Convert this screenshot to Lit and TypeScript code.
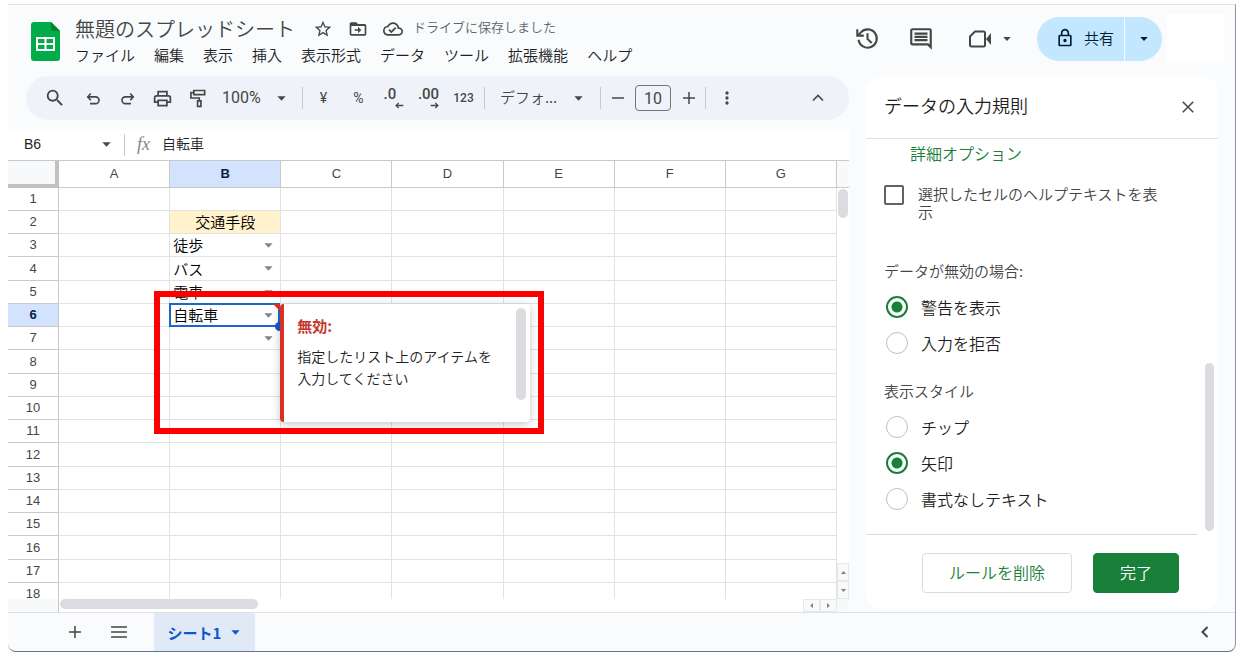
import { LitElement, html, css, svg, nothing } from "lit";
import { customElement, property, state } from "lit/decorators.js";
import { classMap } from "lit/directives/class-map.js";

const fill = (d: string) => svg`<path fill="currentColor" fill-rule="evenodd" d=${d}></path>`;
const line = (d: string, w = 2) =>
  svg`<path fill="none" stroke="currentColor" stroke-width=${w} d=${d}></path>`;

const ICONS: Record<string, unknown> = {
  star: fill("M22 9.24l-7.19-.62L12 2 9.19 8.63 2 9.24l5.46 4.73L5.82 21 12 17.27 18.18 21l-1.63-7.03L22 9.24zM12 15.4l-3.76 2.27 1-4.28-3.32-2.88 4.38-.38L12 6.1l1.71 4.04 4.38.38-3.32 2.88 1 4.28L12 15.4z"),
  move: fill("M20 6h-8l-2-2H4c-1.1 0-2 .9-2 2v12c0 1.1.9 2 2 2h16c1.1 0 2-.9 2-2V8c0-1.1-.9-2-2-2zm0 12H4V8.500h16V18zm-8-.800l4-4-4-4v3H8v2h4v3z"),
  cloud: fill("M19.35 10.04C18.67 6.59 15.64 4 12 4 9.11 4 6.6 5.64 5.35 8.04 2.34 8.36 0 10.91 0 14c0 3.31 2.69 6 6 6h13c2.76 0 5-2.24 5-5 0-2.64-2.05-4.78-4.65-4.96zM19 18H6c-2.21 0-4-1.79-4-4 0-2.05 1.53-3.76 3.56-3.97l1.07-.11.5-.95C8.08 7.14 9.94 6 12 6c2.62 0 4.88 1.86 5.39 4.43l.3 1.5 1.53.11c1.56.1 2.78 1.41 2.78 2.96 0 1.65-1.35 3-3 3zm-9-3.82l-2.09-2.09L6.5 13.5 10 17l6.01-6.01-1.41-1.41z"),
  history: svg`${line("M3.4 13.200A8.800 8.800 0 1 0 5.600 6.100L3.200 8.600")}${line("M2.200 3v6.200h6.200")}${line("M12 7v5.400l4 4")}`,
  comment: fill("M22 4c0-1.1-.89-2-2-2H4c-1.1 0-2 .9-2 2v12c0 1.1.9 2 2 2h14l4 4V4zM20 4v13.17L18.83 16H4V4h16zM6 12h12v2H6zm0-3h12v2H6zm0-3h12v2H6z"),
  meet: svg`${line("M7 4.500h8.500a1.500 1.500 0 0 1 1.500 1.500v12a1.500 1.500 0 0 1-1.500 1.500h-12A1.500 1.500 0 0 1 2 18V9.500z")}${fill("M18 12l5-6v12z")}`,
  lock: fill("M18 8h-1V6c0-2.76-2.24-5-5-5S7 3.24 7 6v2H6c-1.1 0-2 .9-2 2v10c0 1.1.9 2 2 2h12c1.1 0 2-.9 2-2V10c0-1.1-.9-2-2-2zM9 6c0-1.66 1.34-3 3-3s3 1.34 3 3v2H9V6zm9 14H6V10h12v10zm-6-3c1.1 0 2-.9 2-2s-.9-2-2-2-2 .9-2 2 .9 2 2 2z"),
  search: fill("M15.5 14h-.79l-.28-.27A6.471 6.471 0 0 0 16 9.5 6.5 6.5 0 1 0 9.5 16c1.61 0 3.09-.59 4.23-1.57l.27.28v.79l5 4.99L20.49 19l-4.99-5zm-6 0C7.01 14 5 11.99 5 9.5S7.01 5 9.5 5 14 7.01 14 9.5 11.99 14 9.5 14z"),
  undo: svg`${line("M9 6L5 10.500l4 4.500", 2.2)}${line("M5 10.500h10.500a4.500 4.500 0 0 1 0 9H8", 2.2)}`,
  redo: svg`${line("M15 6l4 4.500-4 4.500", 2.2)}${line("M19 10.500H8.500a4.500 4.500 0 0 0 0 9H16", 2.2)}`,
  print: fill("M19 8h-1V3H6v5H5c-1.66 0-3 1.34-3 3v6h4v4h12v-4h4v-6c0-1.66-1.34-3-3-3zM8 5h8v3H8V5zm8 12v2H8v-4h8v2zm2-2v-2H6v2H4v-4c0-.55.45-1 1-1h14c.55 0 1 .45 1 1v4h-2z"),
  roller: svg`${line("M7 3h13v5H7z")}${line("M7 5.500H3.500V12h10v3")}${line("M11.500 15.500h4V22h-4z")}`,
  minus: line("M4 12h16"),
  plus: line("M4 12h16M12 4v16"),
  more: fill("M12 8a2 2 0 1 0 0-4 2 2 0 0 0 0 4zm0 2a2 2 0 1 0 0 4 2 2 0 0 0 0-4zm0 6a2 2 0 1 0 0 4 2 2 0 0 0 0-4z"),
  up: line("M6 15l6-6 6 6"),
  left: line("M15 6l-6 6 6 6", 2.5),
  close: line("M5 5l14 14M19 5L5 19"),
  menu: line("M2.500 6h19M2.500 12h19M2.500 18h19"),
  caret: fill("M3 7h18l-9 10z"),
  arrowLeft: line("M22 12H4M10 5l-7 7 7 7", 3.5),
  arrowRight: line("M2 12h18M14 5l7 7-7 7", 3.5),
};

@customElement("ui-icon")
class UiIcon extends LitElement {
  @property() name = "";
  @property({ type: Number }) size = 20;
  static styles = css`
    :host { display: inline-flex; flex: none; }
    svg { display: block; }
  `;
  render() {
    return html`<svg width=${this.size} height=${this.size} viewBox="0 0 24 24" aria-hidden="true">${ICONS[this.name]}</svg>`;
  }
}

const reset = css`
  :host, *, *::before, *::after { box-sizing: border-box; }
  :host { font-family: "Noto Sans CJK JP", sans-serif; font-weight: 350; color: #444746; }
  button, input, select { font: inherit; color: inherit; margin: 0; padding: 0; border: 0; background: none; border-radius: 0; }
  button { display: inline-flex; align-items: center; justify-content: center; cursor: pointer; flex: none; }
  select { appearance: none; min-width: 0; }
  .pick { display: grid; align-items: center; }
  .pick > * { grid-area: 1 / 1; }
  .pick ui-icon { justify-self: end; pointer-events: none; }
`;

@customElement("sheet-header")
class SheetHeader extends LitElement {
  static styles = [reset, css`
    :host { display: flex; height: 71px; padding: 0 11px 0 23px; }
    .logo { align-self: flex-start; margin: 17px 15px 0 0; flex: none; }
    .doc { padding-top: 10px; flex: 1; min-width: 0; white-space: nowrap; }
    .title { display: flex; align-items: center; height: 28px; }
    h1 { margin: 0 18px 0 0; font-size: 20px; line-height: 28px; font-weight: 350; }
    .title button { margin-right: 15px; }
    .title .saved-icon { margin-right: 10px; }
    .saved { font-size: 13px; line-height: 24px; color: #5f6368; align-self: flex-start; }
    nav { display: flex; gap: 19px; height: 24px; align-items: center; }
    nav button { font-size: 15px; line-height: 24px; color: #1f1f1f; }
    .actions { display: flex; align-items: center; height: 67px; }
    .round { width: 54px; height: 40px; }
    .meet { width: 66px; height: 40px; gap: 10px; margin-right: 23px; }
    .meet.meet { padding-left: 17px; }
    .share { display: flex; gap: 1px; border-radius: 22px; overflow: hidden; height: 44px; color: #001d35; margin-right: 5px; }
    .share button { background: #c2e7ff; }
    .share-main { width: 87px; font-size: 15px; gap: 9px; }
    .share-main.share-main { padding: 0 0 2px 8px; }
    .share-more { width: 37px; }
    .account { width: 57px; height: 49px; background: #fff; }
  `];
  render() {
    const menus = ["ファイル", "編集", "表示", "挿入", "表示形式", "データ", "ツール", "拡張機能", "ヘルプ"];
    return html`
      <svg class="logo" width="29" height="39" viewBox="0 0 29 39" aria-hidden="true">
        <path fill="#00ac47" d="M3 0h17l9 9v27a3 3 0 0 1-3 3H3a3 3 0 0 1-3-3V3a3 3 0 0 1 3-3z"></path>
        <path fill="#00832d" d="M20 0l9 9h-9z"></path>
        <path fill="#fff" fill-rule="evenodd" d="M5 15h19v14H5zM7 17v4h6.500v-4zM15.500 17v4H22v-4zM7 23v4h6.500v-4zM15.500 23v4H22v-4z"></path>
      </svg>
      <div class="doc">
        <div class="title">
          <h1>無題のスプレッドシート</h1>
          <button aria-label="スター"><ui-icon name="star" size="20"></ui-icon></button>
          <button aria-label="移動"><ui-icon name="move" size="20"></ui-icon></button>
          <button class="saved-icon" aria-label="保存状況"><ui-icon name="cloud" size="20"></ui-icon></button>
          <span class="saved">ドライブに保存しました</span>
        </div>
        <nav>${menus.map((m) => html`<button>${m}</button>`)}</nav>
      </div>
      <div class="actions">
        <button class="round" aria-label="変更履歴"><ui-icon name="history" size="25"></ui-icon></button>
        <button class="round" aria-label="コメント"><ui-icon name="comment" size="26"></ui-icon></button>
        <button class="meet" aria-label="通話"><ui-icon name="meet" size="24"></ui-icon><ui-icon name="caret" size="10"></ui-icon></button>
        <div class="share">
          <button class="share-main"><ui-icon name="lock" size="20"></ui-icon>共有</button>
          <button class="share-more" aria-label="共有オプション"><ui-icon name="caret" size="10"></ui-icon></button>
        </div>
        <div class="account"></div>
      </div>`;
  }
}

@customElement("sheet-toolbar")
class SheetToolbar extends LitElement {
  static styles = [reset, css`
    :host { display: flex; align-items: center; height: 44px; margin-left: 18px; padding: 0 14px 0 8px; border-radius: 22px; background: #eff3f9; }
    button { width: 35px; height: 32px; font: 14px/20px Roboto, sans-serif; }
    .search { width: 41px; }
    .sep { width: 1px; height: 22px; margin: 0 3px; background: #c7cacd; flex: none; }
    .pick ui-icon { margin-right: 12px; }
    .zoom { width: 84px; }
    .zoom select { font: 16px/24px Roboto, sans-serif; padding-left: 7px; }
    .typeface { width: 109px; }
    .typeface ui-icon { margin-right: 13px; }
    .typeface select { font-size: 15px; line-height: 24px; padding: 0 0 2px 12px; }
    .decimal { display: grid; justify-items: start; justify-content: center; align-content: center; padding-top: 2px; font-size: 15px; line-height: 13px; font-weight: 500; }
    .decimal ui-icon { justify-self: end; }
    .less { grid-template-columns: 20px; }
    .digits { font-size: 12px; font-weight: 500; }
    .step { width: 27px; }
    .size { width: 36px; height: 26px; margin: 0 4px; border: 1px solid #747775; border-radius: 4px; text-align: center; font: 16px/24px Roboto, sans-serif; }
    .collapse { margin-left: auto; }
  `];
  render() {
    return html`
      <button class="search" aria-label="検索"><ui-icon name="search" size="22"></ui-icon></button>
      <button aria-label="元に戻す"><ui-icon name="undo" size="18"></ui-icon></button>
      <button aria-label="やり直し"><ui-icon name="redo" size="18"></ui-icon></button>
      <button aria-label="印刷"><ui-icon name="print" size="21"></ui-icon></button>
      <button aria-label="書式を貼り付け"><ui-icon name="roller" size="20"></ui-icon></button>
      <label class="pick zoom"><select aria-label="ズーム"><option>100%</option></select><ui-icon name="caret" size="11"></ui-icon></label>
      <span class="sep"></span>
      <button>¥</button>
      <button>%</button>
      <button class="decimal less" aria-label="小数点以下の桁数を減らす"><span>.0</span><ui-icon name="arrowLeft" size="9"></ui-icon></button>
      <button class="decimal" aria-label="小数点以下の桁数を増やす"><span>.00</span><ui-icon name="arrowRight" size="9"></ui-icon></button>
      <button class="digits">123</button>
      <span class="sep"></span>
      <label class="pick typeface"><select aria-label="フォント"><option>デフォ...</option></select><ui-icon name="caret" size="11"></ui-icon></label>
      <span class="sep"></span>
      <button class="step" aria-label="小さく"><ui-icon name="minus" size="18"></ui-icon></button>
      <input class="size" aria-label="フォントサイズ" value="10">
      <button class="step" aria-label="大きく"><ui-icon name="plus" size="18"></ui-icon></button>
      <span class="sep"></span>
      <button aria-label="その他"><ui-icon name="more" size="20"></ui-icon></button>
      <button class="collapse" aria-label="メニューを非表示"><ui-icon name="up" size="20"></ui-icon></button>`;
  }
}

const COLUMNS = ["A", "B", "C", "D", "E", "F", "G"];
const CHOICES: Record<number, string> = { 3: "徒歩", 4: "バス", 5: "電車", 6: "自転車", 7: "" };

@customElement("sheet-grid")
class SheetGrid extends LitElement {
  @state() private active = 6;
  static styles = [reset, css`
    :host { display: flex; flex-direction: column; flex: 1; min-height: 0; background: #fff; }
    .formula { display: flex; align-items: center; height: 32px; border-bottom: 1px solid #c7c9cb; flex: none; color: #1f1f1f; }
    .name { width: 116px; }
    .name input { width: 100%; padding: 0 0 2px 16px; font: 14px/20px "Liberation Sans", sans-serif; }
    .name ui-icon { margin-right: 12px; color: #444746; }
    .fx { width: 38px; padding: 0 0 2px 12px; border-left: 1px solid #c7c9cb; font: italic 18px/20px "Liberation Serif", serif; color: #80868b; flex: none; }
    .entry { flex: 1; font-size: 14px; line-height: 24px; min-width: 0; padding-bottom: 4px; }
    .view { display: flex; flex: 1; min-height: 0; }
    .cells { flex: 1; min-width: 0; overflow: hidden; }
    table { width: 100%; table-layout: fixed; border-collapse: separate; border-spacing: 0; }
    th, td { height: 23px; padding: 0; border: solid #e1e3e1; border-width: 0 1px 1px 0; font-size: 15px; line-height: 20px; color: #000; }
    tr.tall > * { height: 24px; }
    th { font: 13px/16px "Liberation Sans", sans-serif; color: #444746; border-color: #c7c9cb; }
    thead th { height: 27px; }
    th.gutter { width: 51px; background: #f8f9fa; border: solid #bfc1c3; border-width: 0 4px 4px 0; }
    th.on { background: #d3e3fd; color: #041e49; font-weight: 700; }
    td.heading { background: #fff2cc; text-align: center; }
    td.anchor { position: relative; }
    .cell { height: 22px; }
    .cell select { width: 100%; height: 22px; padding-left: 3px; line-height: 22px; }
    .cell ui-icon { margin-right: 6px; color: #80868b; }
    .ring { position: absolute; inset: -1px 0 -1px -1px; border: 2px solid #1a66d0; pointer-events: none; }
    .corner { position: absolute; top: 0; right: 0; border: solid transparent; border-width: 0 7px 7px 0; border-right-color: #d93025; }
    .handle { position: absolute; right: -4px; bottom: -5px; width: 9px; height: 9px; border-radius: 50%; background: #0b57d0; }
    .tip { position: absolute; z-index: 2; top: 0; left: 100%; width: 250px; height: 118px; padding: 11px 4px 0 13px; border-left: 4px solid #d93025; border-radius: 4px; background: #fff; box-shadow: 0 2px 8px rgb(60 64 67 / 30%); display: flex; }
    .tip div { flex: 1; white-space: nowrap; }
    .tip h2 { margin: 0 0 8px; font-size: 15px; line-height: 22px; font-weight: 700; color: #c5362c; }
    .tip p { margin: 0; font-size: 14px; line-height: 22px; color: #202124; }
    .tip i { width: 10px; height: 92px; margin-top: -7px; border-radius: 5px; background: #dadce0; flex: none; }
    .mark { position: absolute; z-index: 3; top: -13px; left: -16px; width: 390px; height: 143px; border: 6px solid #f00; pointer-events: none; }
    .vbar { width: 12px; display: flex; flex-direction: column; align-items: center; flex: none; }
    .vbar .cap { width: 100%; height: 27px; background: #f8f9fa; border-bottom: 1px solid #c7c9cb; }
    .vbar .thumb { width: 10px; height: 29px; margin-top: 1px; border-radius: 5px; background: #dadce0; }
    .vbar .space { flex: 1; }
    .arrow { background: #f8f9fa; border: 1px solid #e6e8ea; color: #80868b; }
    .vbar .arrow { width: 12px; height: 18px; }
    .flip { transform: rotate(180deg); }
    .hbar { display: flex; height: 13px; flex: none; }
    .hbar .cap { width: 51px; background: #f8f9fa; border-right: 1px solid #c7c9cb; }
    .hbar .thumb { width: 198px; height: 10px; margin: 0 0 0 1px; border-radius: 5px; background: #dadce0; }
    .hbar .space { flex: 1; }
    .hbar .arrow { width: 17px; }
    .hbar .end { width: 12px; background: #f8f9fa; }
    .turn-left { transform: rotate(90deg); }
    .turn-right { transform: rotate(-90deg); }
  `];

  private cell(row: number, col: string) {
    if (col !== "B") return html`<td></td>`;
    if (row === 2) return html`<td class="heading">交通手段</td>`;
    if (!(row in CHOICES)) return html`<td></td>`;
    const on = row === this.active;
    return html`<td class=${classMap({ anchor: on })}>
      <label class="pick cell">
        <select aria-label="B${row}"><option>${CHOICES[row]}</option></select>
        <ui-icon name="caret" size="11"></ui-icon>
      </label>
      ${on ? html`
        <span class="ring"></span><span class="corner"></span><span class="handle"></span>
        <aside class="tip"><div><h2>無効:</h2><p>指定したリスト上のアイテムを<br>入力してください</p></div><i></i></aside>
        <span class="mark"></span>` : nothing}
    </td>`;
  }

  render() {
    const rows = Array.from({ length: 18 }, (_, i) => i + 1);
    return html`
      <div class="formula">
        <label class="pick name"><input aria-label="名前ボックス" value="B6"><ui-icon name="caret" size="11"></ui-icon></label>
        <span class="fx">fx</span>
        <input class="entry" aria-label="数式バー" value="自転車">
      </div>
      <div class="view">
        <div class="cells">
          <table>
            <thead><tr><th class="gutter"></th>${COLUMNS.map((c) => html`<th class=${classMap({ on: c === "B" })}>${c}</th>`)}</tr></thead>
            <tbody>${rows.map((r) => html`
              <tr class=${classMap({ tall: r % 4 === 0 })}>
                <th class=${classMap({ on: r === this.active })}>${r}</th>
                ${COLUMNS.map((c) => this.cell(r, c))}
              </tr>`)}</tbody>
          </table>
        </div>
        <div class="vbar">
          <div class="cap"></div><div class="thumb"></div><div class="space"></div>
          <button class="arrow" aria-label="上へ"><ui-icon class="flip" name="caret" size="7"></ui-icon></button>
          <button class="arrow" aria-label="下へ"><ui-icon name="caret" size="7"></ui-icon></button>
        </div>
      </div>
      <div class="hbar">
        <div class="cap"></div><div class="thumb"></div><div class="space"></div>
        <button class="arrow" aria-label="左へ"><ui-icon class="turn-left" name="caret" size="7"></ui-icon></button>
        <button class="arrow" aria-label="右へ"><ui-icon class="turn-right" name="caret" size="7"></ui-icon></button>
        <div class="end"></div>
      </div>`;
  }
}

@customElement("rules-panel")
class RulesPanel extends LitElement {
  static styles = [reset, css`
    :host { display: flex; flex-direction: column; width: 352px; flex: none; margin-bottom: 2px; border-radius: 16px; background: #fff; }
    header { display: flex; align-items: center; justify-content: space-between; height: 63px; padding: 0 21px 0 18px; border-bottom: 1px solid #e1e3e6; flex: none; }
    h2 { margin: 0; padding-bottom: 4px; font-size: 18px; line-height: 26px; font-weight: 350; color: #1f1f1f; }
    .scroll { display: flex; flex: 1; min-height: 0; }
    .body { flex: 1; min-width: 0; padding: 2px 18px 0; overflow: hidden; border-bottom: 1px solid #dadce0; font-size: 15px; }
    .track { width: 21px; display: flex; flex-direction: column; justify-content: flex-end; align-items: center; padding: 0 0 4px 3px; flex: none; }
    .thumb { width: 9px; height: 168px; border-radius: 5px; background: #dadce0; }
    a { display: block; margin-left: 26px; font-size: 16px; line-height: 24px; color: #188038; text-decoration: none; }
    .check { display: flex; gap: 14px; margin-top: 20px; padding-right: 8px; line-height: 18px; }
    .check input { appearance: none; width: 20px; height: 20px; border: 2px solid #5f6368; border-radius: 2px; flex: none; }
    fieldset { margin: 0; padding: 0; border: 0; }
    legend { padding: 0; margin-bottom: 6px; line-height: 24px; }
    .invalid { margin-top: 38px; }
    .style { margin-top: 18px; }
    .radio { display: flex; align-items: center; gap: 13px; height: 36px; padding-left: 2px; font-size: 16px; line-height: 24px; color: #1f1f1f; }
    .radio input { appearance: none; width: 22px; height: 22px; border: 1px solid #bdc1c6; border-radius: 50%; background: #fff; flex: none; }
    .radio input:checked { border: 2px solid #188038; background: radial-gradient(circle, #188038 5px, #fff 6px); }
    footer { display: flex; justify-content: flex-end; gap: 21px; height: 75px; padding: 18px 39px 0 0; flex: none; }
    footer button { height: 40px; font-size: 16px; border: 1px solid #dadce0; border-radius: 4px; color: #188038; padding: 0 26px 2px; }
    footer .done { background: #188038; border-color: #188038; color: #fff; }
  `];
  private radio(group: string, text: string, on = false) {
    return html`<label class="radio"><input type="radio" name=${group} ?checked=${on}>${text}</label>`;
  }
  render() {
    return html`
      <header><h2>データの入力規則</h2><button aria-label="閉じる"><ui-icon name="close" size="18"></ui-icon></button></header>
      <div class="scroll">
        <div class="body">
          <a href="#">詳細オプション</a>
          <label class="check"><input type="checkbox"><span>選択したセルのヘルプテキストを表示</span></label>
          <fieldset class="invalid"><legend>データが無効の場合:</legend>
            ${this.radio("invalid", "警告を表示", true)}${this.radio("invalid", "入力を拒否")}
          </fieldset>
          <fieldset class="style"><legend>表示スタイル</legend>
            ${this.radio("style", "チップ")}${this.radio("style", "矢印", true)}${this.radio("style", "書式なしテキスト")}
          </fieldset>
        </div>
        <div class="track"><div class="thumb"></div></div>
      </div>
      <footer><button>ルールを削除</button><button class="done">完了</button></footer>`;
  }
}

@customElement("app-root")
class AppRoot extends LitElement {
  static styles = [reset, css`
    :host { display: block; height: 100vh; padding: 4px 8px 6px; background: #fff; }
    .window { display: flex; flex-direction: column; height: 100%; overflow: hidden; background: #f9fbfd; border: solid #e0e2e5; border-width: 1px 0 0; border-right: 1px solid #8b97a6; border-bottom: 1px solid #5a7796; border-radius: 0 0 8px 8px; }
    main { display: flex; flex: 1; min-height: 0; gap: 17px; padding-right: 17px; }
    .sheet { display: flex; flex-direction: column; flex: 1; min-width: 0; gap: 9px; }
    .tabs { display: flex; height: 39px; border-top: 1px solid #dfe1e5; padding: 0 20px 0 45px; flex: none; }
    .tool { width: 44px; }
    .tab { width: 101px; margin-left: 13px; gap: 9px; background: #e1e9f7; color: #0b57d0; font-size: 15px; font-weight: 700; }
    .back { margin-left: auto; }
  `];
  render() {
    return html`
      <div class="window">
        <sheet-header></sheet-header>
        <main>
          <div class="sheet"><sheet-toolbar></sheet-toolbar><sheet-grid></sheet-grid></div>
          <rules-panel></rules-panel>
        </main>
        <div class="tabs">
          <button class="tool" aria-label="シートを追加"><ui-icon name="plus" size="18"></ui-icon></button>
          <button class="tool" aria-label="すべてのシート"><ui-icon name="menu" size="20"></ui-icon></button>
          <button class="tab">シート1<ui-icon name="caret" size="11"></ui-icon></button>
          <button class="back" aria-label="サイドパネル"><ui-icon name="left" size="20"></ui-icon></button>
        </div>
      </div>`;
  }
}
